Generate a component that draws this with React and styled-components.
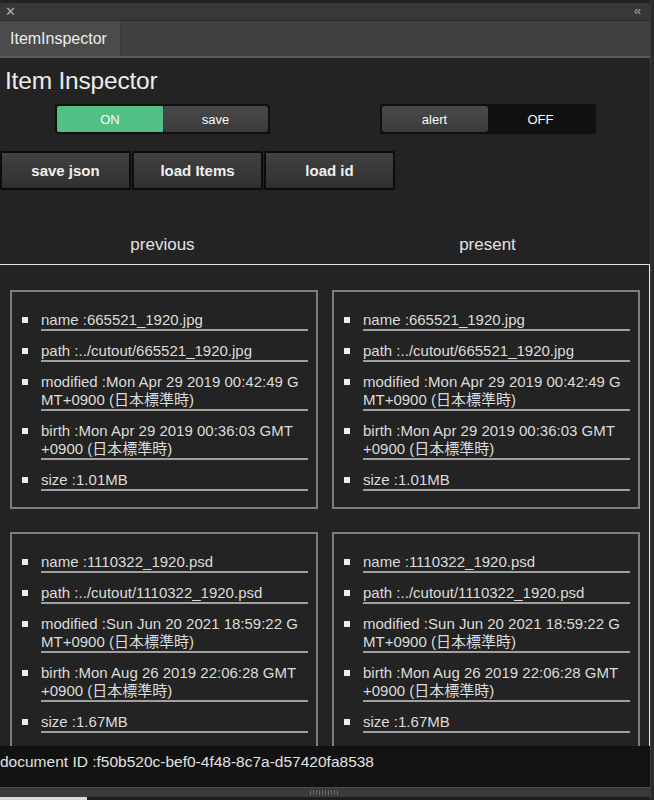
import React from "react";
import styled, { createGlobalStyle } from "styled-components";

const GlobalStyle = createGlobalStyle`
  html, body {
    margin: 0;
    padding: 0;
    background: #232323;
    font-family: "Liberation Sans", "Noto Sans CJK JP", Arial, sans-serif;
    overflow: hidden;
  }
`;

const Frame = styled.div`
  display: flex;
  height: 800px;
  width: 654px;
  background: #232323;
`;

const Panel = styled.div`
  flex: 1;
  display: flex;
  flex-direction: column;
  min-width: 0;
`;

const EdgeStrip = styled.div`
  width: 3px;
  background: #2b2b2b;
  border-left: 1px solid #3a3a3a;
`;

const TitleBar = styled.div`
  height: 17px;
  margin-top: 3px;
  background: #383838;
  border-top-right-radius: 4px;
  display: flex;
  align-items: center;
  justify-content: space-between;
  padding: 0 10px 0 5px;
  color: #b0b0b0;
  font-size: 13px;
  line-height: 17px;
`;

const Chevrons = styled.span`
  font-size: 12px;
  letter-spacing: -1px;
  color: #a8a8a8;
`;

const TabBar = styled.div`
  height: 35px;
  background: #414141;
  border-top: 1px solid #2c2c2c;
  border-bottom: 2px solid #5a5a5a;
  display: flex;
`;

const Tab = styled.div`
  width: 121px;
  background: #4b4b4b;
  border-right: 1px solid #3a3a3a;
  color: #ececec;
  font-size: 16px;
  display: flex;
  align-items: center;
  padding-left: 10px;
  box-sizing: border-box;
`;

const Scroll = styled.div`
  flex: 1;
  overflow: hidden;
  background: #232323;
`;

const Heading = styled.h1`
  margin: 0;
  padding: 7px 0 0 5px;
  height: 39px;
  font-size: 24.5px;
  font-weight: normal;
  letter-spacing: -0.2px;
  line-height: 32px;
  color: #ececec;
`;

const Halves = styled.div`
  display: grid;
  grid-template-columns: 325px 325px;
  justify-items: center;
`;

const Toggle = styled.div`
  display: inline-flex;
  background: #0f0f0f;
  padding: 2px;
  border-radius: 3px;
`;

const Segment = styled.div`
  width: ${(p) => p.w || 106}px;
  height: 26px;
  display: flex;
  align-items: center;
  justify-content: center;
  font-size: 13px;
  color: #fafafa;
  border-radius: ${(p) => (p.green ? "2px 0 0 2px" : "3px")};
  background: ${(p) =>
    p.green
      ? "#52bf84"
      : p.dark
      ? "#111"
      : "linear-gradient(#4a4a4a, #3a3a3a)"};
`;

const ButtonRow = styled.div`
  display: flex;
  gap: 1px;
  margin-top: 17px;
`;

const Button = styled.button`
  width: 131px;
  height: 39px;
  border: 2px solid #0c0c0c;
  border-radius: 2px;
  background: linear-gradient(#424242, #2f2f2f);
  color: #f0f0f0;
  font-family: inherit;
  font-size: 15px;
  font-weight: bold;
  padding: 0;
`;

const ColumnTitle = styled.div`
  font-size: 17px;
  color: #e2e2e2;
  line-height: 22px;
  padding-top: 44px;
  padding-bottom: 8px;
`;

const ListBox = styled.div`
  border-top: 1px solid #e6e6e6;
  border-right: 1px solid #e6e6e6;
  display: grid;
  grid-template-columns: 308px 308px;
  column-gap: 14px;
  row-gap: 23px;
  padding: 25px 0 0 10px;
`;

const Card = styled.ul`
  list-style: none;
  margin: 0;
  border: 2px solid #7e7e7e;
  padding: 19px 8px 5px 29px;
`;

const Item = styled.li`
  position: relative;
  font-size: 15px;
  line-height: 18px;
  color: #dcdcdc;
  word-break: break-all;
  line-break: anywhere;
  padding-right: 7px;
  border-bottom: 2px solid #a0a0a0;
  margin-bottom: 11px;

  &::before {
    content: "";
    position: absolute;
    left: -19px;
    top: 6px;
    width: 6px;
    height: 6px;
    background: #ededed;
  }
`;

const Footer = styled.div`
  height: 41px;
  background: #121212;
  color: #e2e2e2;
  font-size: 15.5px;
  line-height: 18px;
  padding-top: 7px;
  box-sizing: border-box;
`;

const GripBar = styled.div`
  height: 10px;
  background: #3a3a3a;
  border-top: 1px solid #4a4a4a;
  box-sizing: border-box;
  display: flex;
  justify-content: center;
  align-items: center;
`;

const Grip = styled.div`
  width: 30px;
  height: 5px;
  background: repeating-linear-gradient(
    90deg,
    #6a6a6a 0 1px,
    transparent 1px 3px
  );
`;

const BottomEdge = styled.div`
  height: 3px;
  background: linear-gradient(90deg, #d8d8d8 0 87px, #1c1c1c 87px);
`;

const files = [
  [
    {
      name: "665521_1920.jpg",
      path: "../cutout/665521_1920.jpg",
      modified: "Mon Apr 29 2019 00:42:49 GMT+0900 (日本標準時)",
      birth: "Mon Apr 29 2019 00:36:03 GMT+0900 (日本標準時)",
      size: "1.01MB",
    },
    {
      name: "665521_1920.jpg",
      path: "../cutout/665521_1920.jpg",
      modified: "Mon Apr 29 2019 00:42:49 GMT+0900 (日本標準時)",
      birth: "Mon Apr 29 2019 00:36:03 GMT+0900 (日本標準時)",
      size: "1.01MB",
    },
  ],
  [
    {
      name: "1110322_1920.psd",
      path: "../cutout/1110322_1920.psd",
      modified: "Sun Jun 20 2021 18:59:22 GMT+0900 (日本標準時)",
      birth: "Mon Aug 26 2019 22:06:28 GMT+0900 (日本標準時)",
      size: "1.67MB",
    },
    {
      name: "1110322_1920.psd",
      path: "../cutout/1110322_1920.psd",
      modified: "Sun Jun 20 2021 18:59:22 GMT+0900 (日本標準時)",
      birth: "Mon Aug 26 2019 22:06:28 GMT+0900 (日本標準時)",
      size: "1.67MB",
    },
  ],
];

function FileCard({ file }) {
  return (
    <Card>
      {Object.keys(file).map((key) => (
        <Item key={key}>
          {key} :{file[key]}
        </Item>
      ))}
    </Card>
  );
}

export default function App() {
  return (
    <Frame>
      <GlobalStyle />
      <Panel>
        <TitleBar>
          <span>✕</span>
          <Chevrons>‹‹</Chevrons>
        </TitleBar>
        <TabBar>
          <Tab>ItemInspector</Tab>
        </TabBar>
        <Scroll>
          <Heading>Item Inspector</Heading>
          <Halves>
            <Toggle>
              <Segment green>ON</Segment>
              <Segment w={105}>save</Segment>
            </Toggle>
            <Toggle>
              <Segment>alert</Segment>
              <Segment dark>OFF</Segment>
            </Toggle>
          </Halves>
          <ButtonRow>
            <Button>save json</Button>
            <Button>load Items</Button>
            <Button>load id</Button>
          </ButtonRow>
          <Halves>
            <ColumnTitle>previous</ColumnTitle>
            <ColumnTitle>present</ColumnTitle>
          </Halves>
          <ListBox>
            {files.map((pair) =>
              pair.map((file, i) => <FileCard key={file.name + i} file={file} />)
            )}
          </ListBox>
        </Scroll>
        <Footer>document ID :f50b520c-bef0-4f48-8c7a-d57420fa8538</Footer>
        <GripBar>
          <Grip />
        </GripBar>
        <BottomEdge />
      </Panel>
      <EdgeStrip />
    </Frame>
  );
}
